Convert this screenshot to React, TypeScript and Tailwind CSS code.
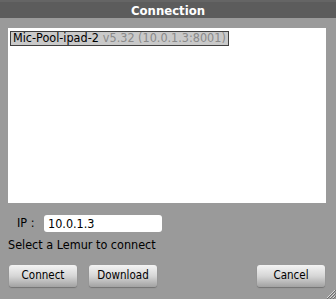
import React, { useState } from "react";

const Btn = ({ label }: { label: string }) => (
  <button className="w-[68px] h-[22px] rounded-[3px] bg-gradient-to-b from-[#f4f4f4] via-[#d6d6d6] to-[#a2a2a2] text-[11.5px] leading-none text-black shadow-[0_1px_1px_rgba(0,0,0,0.25)]">
    {label}
  </button>
);

const App = () => {
  const [ip, setIp] = useState("10.0.1.3");

  return (
    <div className="w-[336px] h-[299px] bg-[#9a9a9a] flex flex-col relative font-['DejaVu_Sans_Condensed','Liberation_Sans',sans-serif] overflow-hidden">
      {/* title */}
      <div className="h-[18px] bg-[#5c5c5c] border-t-2 border-[#656565] flex items-center justify-center text-white font-bold text-[13px] leading-none">
        Connection
      </div>

      {/* lemur list */}
      <div className="mt-[10px] mx-[8px] w-[318px] h-[175px] bg-white pt-[3px] pl-[2px]">
        <div className="flex w-fit items-center h-[15px] px-[2px] bg-[#c9c9c9] border border-[#404040] text-[12.5px] leading-none">
          <span className="text-black">Mic-Pool-ipad-2</span>
          <span className="text-[#8a8a8a] ml-[4px]">v5.32 (10.0.1.3:8001)</span>
        </div>
      </div>

      {/* ip row */}
      <div className="flex items-center h-[17px] mt-[12px] pl-[17px] text-[12.5px] leading-none text-black">
        <span className="w-[27px]">IP :</span>
        <input
          value={ip}
          onChange={(e) => setIp(e.target.value)}
          className="w-[118px] h-[17px] rounded-[3px] bg-white px-[4px] text-[12.5px] outline-none"
        />
      </div>

      <div className="mt-[5px] h-[15px] leading-[15px] pl-[8px] text-[12.5px] text-black">
        Select a Lemur to connect
      </div>

      {/* buttons */}
      <div className="flex items-center mt-[13px] pl-[9px] pr-[11px]">
        <Btn label="Connect" />
        <div className="ml-[12px] flex">
          <Btn label="Download" />
        </div>
        <div className="ml-auto flex">
          <Btn label="Cancel" />
        </div>
      </div>

      {/* resize grip */}
      <svg className="absolute right-0 bottom-0" width="12" height="12" viewBox="0 0 12 12">
        <path d="M11 3L3 11M11 6L6 11M11 9L9 11" stroke="#d8d8d8" strokeWidth="1" />
        <path d="M12 3L3 12M12 6L6 12M12 9L9 12" stroke="#6e6e6e" strokeWidth="1" />
      </svg>
    </div>
  );
};

export default App;
